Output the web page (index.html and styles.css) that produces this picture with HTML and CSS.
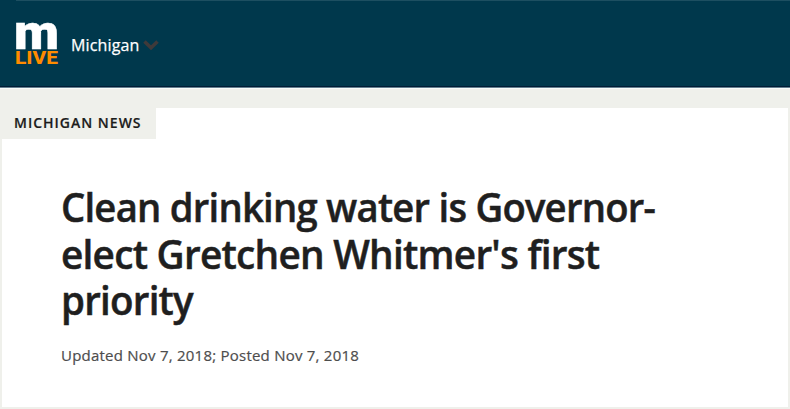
FILE: index.html
```
<!DOCTYPE html>
<html lang="en">
<head>
    <meta charset="UTF-8">
    <meta name="viewport" content="width=device-width, initial-scale=1.0">
    <title>Clean drinking water is Governor-elect Gretchen Whitmer's first priority</title>
    <link rel="stylesheet" href="styles.css">
</head>
<body>
    <header class="site-header">
        <svg class="logo" width="46" height="66" viewBox="0 0 46 66">
            <text class="logo-m" x="-1" y="49.3" textLength="45" lengthAdjust="spacingAndGlyphs">m</text>
            <text class="logo-live" x="0" y="63.5" textLength="43" lengthAdjust="spacingAndGlyphs">LIVE</text>
        </svg>
        <span class="region">Michigan</span>
        <svg class="chevron" width="16" height="12" viewBox="0 0 16 12">
            <path d="M1.5 2.5 L8 8.7 L14.5 2.5" />
        </svg>
    </header>

    <main class="page">
        <article class="article">
            <div class="section-label"><span>MICHIGAN NEWS</span></div>
            <h1 class="headline">
                <span class="line-1">Clean drinking water is Governor-</span>
                <span class="line-2">elect Gretchen Whitmer's first</span>
                <span class="line-3">priority</span>
            </h1>
            <p class="dates">Updated Nov 7, 2018; Posted Nov 7, 2018</p>
        </article>
    </main>
</body>
</html>
```
FILE: styles.css
```
* {
    box-sizing: border-box;
}
body {
    margin: 0;
    height: 409px;
    overflow: hidden;
    background-color: #eff0eb;
    font-family: "Open Sans", "Noto Sans", sans-serif;
}
.site-header {
    display: flex;
    align-items: flex-start;
    height: 88px;
    padding-left: 15px;
    background: linear-gradient(#1d4f61, #1d4f61) 16px 0 / 100% 1px no-repeat #00384c;
    border-bottom: 1px solid #64808f;
    box-shadow: inset 0 -1px 0 #001c36, 0 1px 0 #fafbf9;
}
.logo {
    flex: none;
    overflow: visible;
}
.logo-m {
    font-family: Roboto, "Open Sans", sans-serif;
    font-size: 48px;
    font-weight: 900;
    fill: #fff;
    stroke: #fff;
    stroke-width: 0.5;
}
.logo-live {
    font-family: Roboto, "Open Sans", sans-serif;
    font-size: 19px;
    font-weight: 800;
    fill: #ff8c00;
}
.region {
    margin: 33px 0 0 10px;
    color: #fff;
    font-size: 16px;
    line-height: 24px;
    letter-spacing: 0.15px;
    -webkit-text-stroke: 0.25px #fff;
}
.chevron {
    margin: 39px 0 0 3px;
    fill: none;
    stroke: #3f3a3a;
    stroke-width: 3.6;
}
.page {
    padding: 20px 2px 2px;
}
.article {
    height: 299px;
    background-color: #fff;
}
.section-label {
    display: flex;
    align-items: center;
    width: 154px;
    height: 31px;
    padding: 0 0 2px 12px;
    background-color: #eff0eb;
    color: #1c1c1c;
    font-size: 14px;
    font-weight: 600;
    letter-spacing: 1px;
    -webkit-text-stroke: 0.2px #1c1c1c;
}
.headline {
    margin: 0;
    padding: 45px 0 0 59px;
    color: #1f1f1f;
    font-size: 40px;
    font-weight: 600;
    line-height: 46.5px;
    letter-spacing: -0.8px;
    -webkit-text-stroke: 0.5px #1f1f1f;
}
.headline span {
    display: block;
    width: max-content;
    white-space: nowrap;
    transform-origin: left;
}
.line-1 {
    transform: scaleX(0.956);
}
.line-2 {
    transform: scaleX(0.97);
}
.line-3 {
    transform: scaleX(0.963);
}
.dates {
    margin: 19px 0 0 59px;
    color: #4d4d4d;
    font-size: 15px;
    line-height: 24px;
    letter-spacing: 0.23px;
    -webkit-text-stroke: 0.2px #4d4d4d;
}
```
